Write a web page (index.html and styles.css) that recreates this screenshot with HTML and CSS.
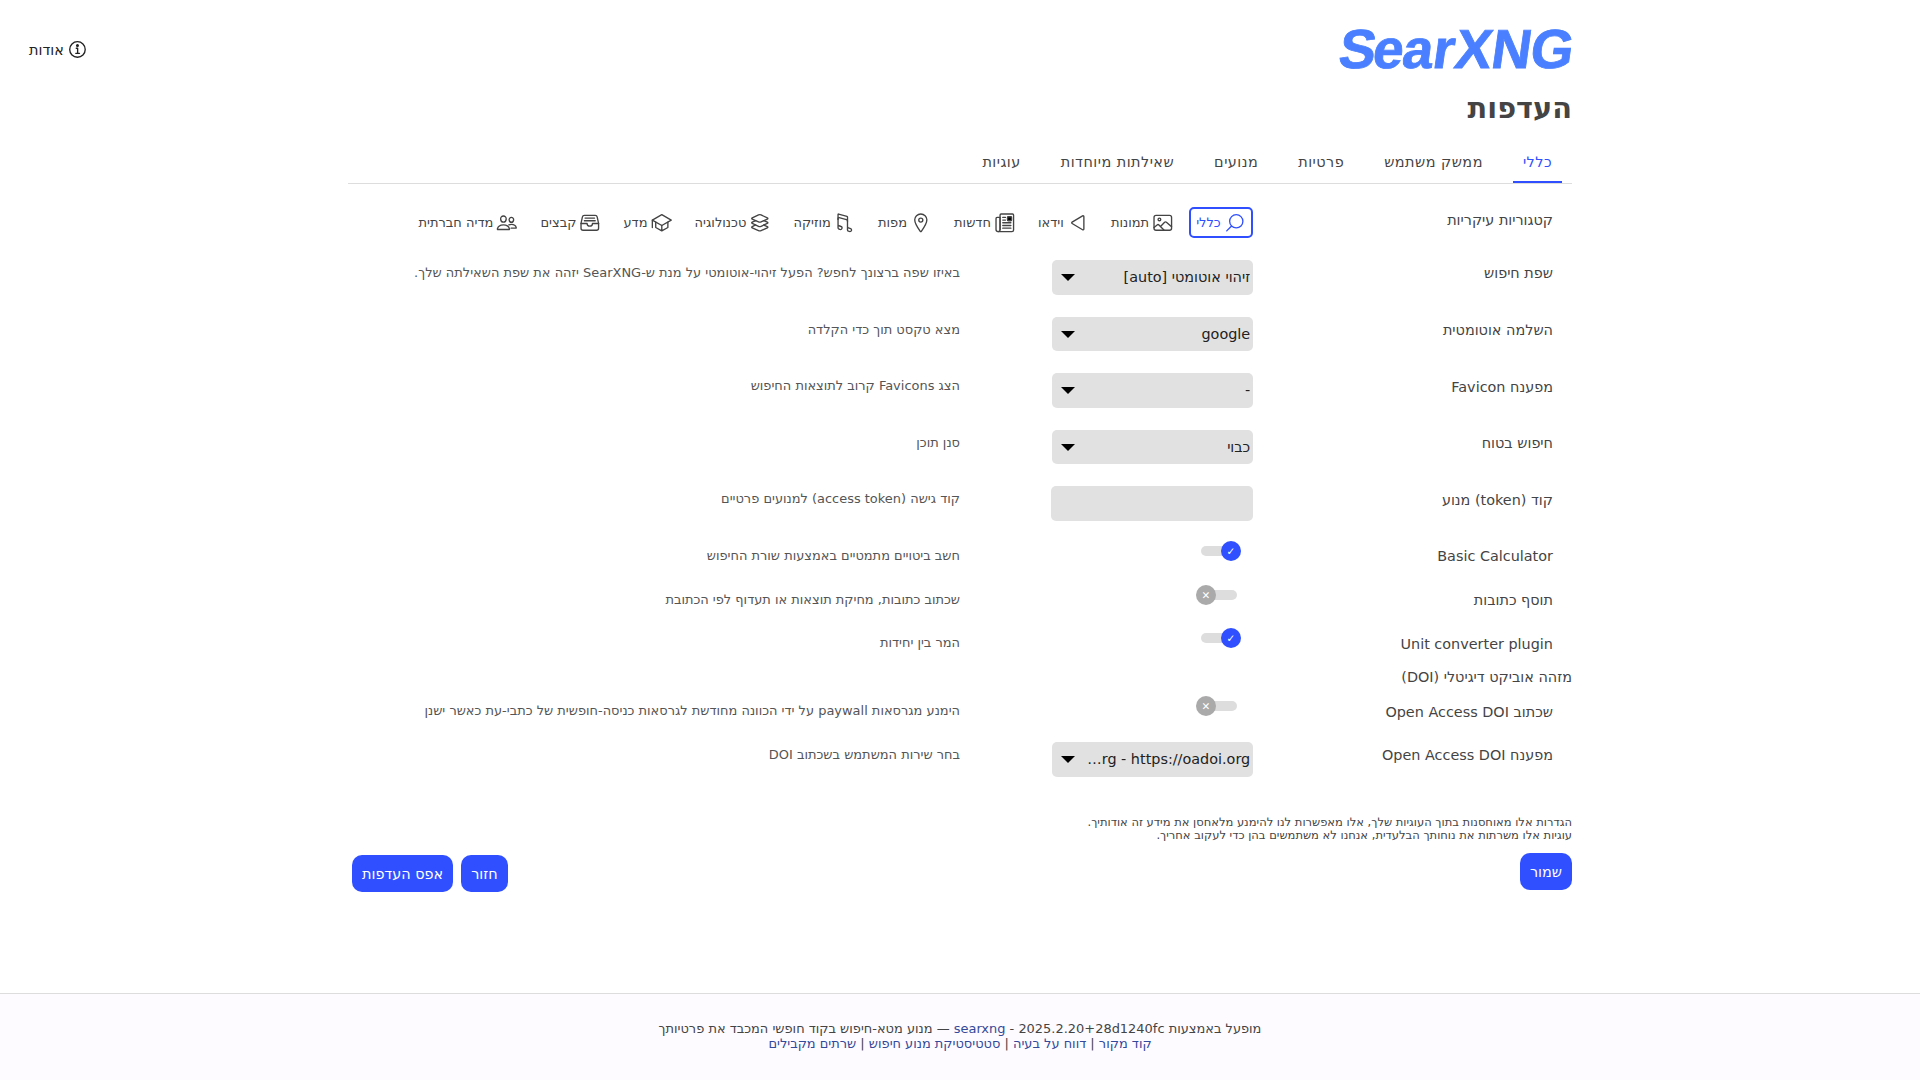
FILE: index.html
```html
<!DOCTYPE html>
<html lang="he" dir="rtl">
<head>
<meta charset="utf-8">
<title>SearXNG</title>
<link rel="stylesheet" href="styles.css">
</head>
<body>
<nav class="links"><a class="about" href="#"><svg class="icon" viewBox="0 0 512 512"><path d="M248 64C146.39 64 64 146.39 64 248s82.39 184 184 184 184-82.39 184-184S349.61 64 248 64z"/><path d="M220 220h32v116M208 340h88"/><circle class="solid" cx="248" cy="156" r="20"/></svg><span>אודות</span></a></nav>
<main class="page">
  <a class="logo" href="#"><svg width="236" height="48" viewBox="0 0 236 48"><text x="0 34 63.5 94 116 152.5 191.5" y="0" transform="translate(0 42) skewX(-8)" direction="ltr">SearXNG</text></svg></a>
  <h1 class="title">העדפות</h1>
  <div class="tabs">
    <a class="tab selected">כללי</a><a class="tab">ממשק משתמש</a><a class="tab">פרטיות</a><a class="tab">מנועים</a><a class="tab">שאילתות מיוחדות</a><a class="tab">עוגיות</a>
  </div>
  <div class="categories-row">
    <div class="name">קטגוריות עיקריות</div>
    <div class="categories">
      <div class="category selected"><svg class="icon" viewBox="0 0 512 512"><path d="M221.09 64a157.09 157.09 0 10157.09 157.09A157.1 157.1 0 00221.09 64zM338.29 338.29L448 448"/></svg><span>כללי</span></div>
      <div class="category"><svg class="icon" viewBox="0 0 512 512"><rect x="48" y="80" width="416" height="352" rx="48"/><circle cx="336" cy="176" r="32"/><path d="M304 335.79l-90.66-90.49a32 32 0 00-43.87-1.3L48 352M224 432l123.34-123.34a32 32 0 0143.11-2L464 368"/></svg><span>תמונות</span></div>
      <div class="category"><svg class="icon" viewBox="0 0 512 512"><path d="M112 111v290c0 17.44 17 28.52 31 20.16l247.9-148.37c12.12-7.25 12.12-26.33 0-33.58L143 90.84c-14-8.36-31 2.72-31 20.16z"/></svg><span>וידאו</span></div>
      <div class="category"><svg class="icon" viewBox="0 0 512 512"><path d="M368 415.86V72a24.07 24.07 0 00-24-24H72a24.07 24.07 0 00-24 24v352a40.12 40.12 0 0040 40h328"/><path d="M416 464h0a48 48 0 01-48-48V128h72a24 24 0 0124 24v264a48 48 0 01-48 48z"/><path d="M240 128h64M240 192h64M112 256h192M112 320h192M112 384h192"/><path class="solid" d="M176 208h-64a16 16 0 01-16-16v-64a16 16 0 0116-16h64a16 16 0 0116 16v64a16 16 0 01-16 16z"/></svg><span>חדשות</span></div>
      <div class="category"><svg class="icon" viewBox="0 0 512 512"><path d="M256 48c-79.5 0-144 61.39-144 137 0 87 96 224.87 131.25 272.49a15.77 15.77 0 0025.5 0C304 409.89 400 272.07 400 185c0-75.61-64.5-137-144-137z"/><circle cx="256" cy="192" r="48"/></svg><span>מפות</span></div>
      <div class="category"><svg class="icon" viewBox="0 0 512 512"><path d="M192 218v-6c0-14.84 10-27 24.24-30.59l174.59-46.68A20 20 0 01416 154v22"/><path d="M416 295.94v80c0 13.91-8.93 25.59-22 30l-22 8c-25.9 8.72-52-10.42-52-38h0a33.37 33.37 0 0123-32l51-18.15c13.07-4.4 22-15.94 22-29.85V58a10 10 0 00-12.6-9.61L204 102a16.48 16.48 0 00-12 16v226c0 13.91-8.93 25.6-22 30l-52 18c-13.88 4.68-22 17.22-22 32h0c0 27.58 26.52 46.55 52 38l22-8c13.07-4.4 22-16.08 22-30v-80"/></svg><span>מוזיקה</span></div>
      <div class="category"><svg class="icon" viewBox="0 0 512 512"><path d="M434.8 137.65l-149.36-68.1c-16.19-7.4-42.69-7.4-58.88 0L77.3 137.65c-17.6 8-17.6 21.09 0 29.09l148 67.5c16.89 7.7 44.69 7.7 61.58 0l148-67.5c17.52-8 17.52-21.1-.08-29.09z"/><path d="M160 308.52l-82.7 37.11c-17.6 8-17.6 21.1 0 29.1l148 67.5c16.89 7.69 44.69 7.69 61.58 0l148-67.5c17.6-8 17.6-21.1 0-29.1l-79.94-38.47"/><path d="M160 204.48l-82.8 37.16c-17.6 8-17.6 21.1 0 29.1l148 67.49c16.89 7.7 44.69 7.7 61.58 0l148-67.49c17.7-8 17.7-21.1.1-29.1L352 204.48"/></svg><span>טכנולוגיה</span></div>
      <div class="category"><svg class="icon" viewBox="0 0 512 512"><path d="M32 192L256 64l224 128-224 128L32 192z"/><path d="M112 240v128l144 80 144-80V240M480 368V192M256 320v128"/></svg><span>מדע</span></div>
      <div class="category"><svg class="icon" viewBox="0 0 512 512"><path d="M384 80H128c-26 0-43 14-48 40L48 272v112a48.14 48.14 0 0048 48h320a48.14 48.14 0 0048-48V272l-32-152c-5-27-23-40-48-40z"/><path d="M48 272h144M320 272h144M192 272a64 64 0 00128 0M144 144h224M128 208h256"/></svg><span>קבצים</span></div>
      <div class="category"><svg class="icon" viewBox="0 0 512 512"><path d="M402 168c-2.93 40.67-33.1 72-66 72s-63.12-31.32-66-72c-3-42.31 26.37-72 66-72s69 30.46 66 72z"/><path d="M336 304c-65.17 0-127.84 32.37-143.54 95.41-2.08 8.34 3.15 16.59 11.72 16.59h263.65c8.57 0 13.77-8.25 11.72-16.59C463.85 335.36 401.18 304 336 304z"/><path d="M200 185.94c-2.34 32.48-26.72 58.06-53 58.06s-50.7-25.57-53-58.06C91.61 152.15 115.34 128 147 128s55.39 24.77 53 57.94z"/><path d="M206 306c-18.05-8.27-37.93-11.45-59-11.45-52 0-102.1 25.85-114.65 76.2-1.65 6.66 2.53 13.25 9.37 13.25H154"/></svg><span>מדיה חברתית</span></div>
    </div>
  </div>
  <div class="row"><div class="name">שפת חיפוש</div><div class="value"><div class="select"><span>זיהוי אוטומטי [auto]</span></div></div><div class="description">באיזו שפה ברצונך לחפש? הפעל זיהוי-אוטומטי על מנת ש-SearXNG יזהה את שפת השאילתה שלך.</div></div>
  <div class="row"><div class="name">השלמה אוטומטית</div><div class="value"><div class="select"><span>google</span></div></div><div class="description">מצא טקסט תוך כדי הקלדה</div></div>
  <div class="row"><div class="name">מפענח Favicon</div><div class="value"><div class="select"><span>-</span></div></div><div class="description">הצג Favicons קרוב לתוצאות החיפוש</div></div>
  <div class="row"><div class="name">חיפוש בטוח</div><div class="value"><div class="select"><span>כבוי</span></div></div><div class="description">סנן תוכן</div></div>
  <div class="row"><div class="name">קוד (token) מנוע</div><div class="value"><input class="token" type="text"></div><div class="description">קוד גישה (access token) למנועים פרטיים</div></div>
  <div class="row short"><div class="name">Basic Calculator</div><div class="value"><div class="toggle on"><span class="knob">✓</span></div></div><div class="description">חשב ביטויים מתמטיים באמצעות שורת החיפוש</div></div>
  <div class="row short"><div class="name">תוסף כתובות</div><div class="value"><div class="toggle"><span class="knob">✕</span></div></div><div class="description">שכתוב כתובות, מחיקת תוצאות או תעדוף לפי הכתובת</div></div>
  <div class="row short"><div class="name">Unit converter plugin</div><div class="value"><div class="toggle on"><span class="knob">✓</span></div></div><div class="description">המר בין יחידות</div></div>
  <div class="group-title">מזהה אוביקט דיגיטלי (DOI)</div>
  <div class="row short"><div class="name">שכתוב Open Access DOI</div><div class="value"><div class="toggle"><span class="knob">✕</span></div></div><div class="description">הימנע מגרסאות paywall על ידי הכוונה מחודשת לגרסאות כניסה-חופשית של כתבי-עת כאשר ישנן</div></div>
  <div class="row"><div class="name">מפענח Open Access DOI</div><div class="value"><div class="select"><span>oadoi.org - https://oadoi.org</span></div></div><div class="description">בחר שירות המשתמש בשכתוב DOI</div></div>
  <p class="note">הגדרות אלו מאוחסנות בתוך העוגיות שלך, אלו מאפשרות לנו להימנע מלאחסן את מידע זה אודותיך.<br>עוגיות אלו משרתות את נוחותך הבלעדית, אנחנו לא משתמשים בהן כדי לעקוב אחריך.</p>
  <div class="actions"><a class="button">שמור</a><div class="secondary"><a class="button">חזור</a><a class="button">אפס העדפות</a></div></div>
</main>
<footer class="footer">
  <p>מופעל באמצעות <a href="#">searxng</a> - 2025.2.20+28d1240fc — מנוע מטא-חיפוש בקוד חופשי המכבד את פרטיותך<br><a href="#">קוד מקור</a> | <a href="#">דווח על בעיה</a> | <a href="#">סטטיסטיקת מנוע חיפוש</a> | <a href="#">שרתים מקבילים</a></p>
</footer>
</body>
</html>
```
FILE: styles.css
```css
* { box-sizing: border-box; }
html { height: 100%; }
body {
  margin: 0;
  height: 1080px;
  display: flex;
  flex-direction: column;
  overflow: hidden;
  background: #fff;
  color: #444;
  font: 14.4px/17px "DejaVu Sans", sans-serif;
}
a { text-decoration: none; color: inherit; }
.icon {
  width: 21.6px;
  height: 21.6px;
  flex: none;
  fill: none;
  stroke: currentColor;
  stroke-width: 32;
  stroke-linecap: round;
  stroke-linejoin: round;
  transform: scaleX(-1);
}
.icon .solid { fill: #000; }
.links { position: absolute; top: 39px; left: 29px; }
.about { display: flex; align-items: center; gap: 3px; color: #222; }
.about span { padding-top: 1px; }
.about .icon { transform: none; }
.page { width: 1224px; margin: 0 auto; flex: 1; }
.logo { display: block; width: 236px; height: 48px; margin: 26px -1px 0 0; }
.logo svg { display: block; overflow: visible; }
.logo text { font: bold 55px "Liberation Sans", sans-serif; fill: #4a80ff; stroke: #4a80ff; stroke-width: .8px; }
.title { margin: 17px 0 0; font-size: 28.8px; line-height: 34px; height: 34px; }
.tabs {
  display: flex;
  gap: 20px;
  height: 59px;
  padding-right: 10px;
  align-items: flex-end;
  border-bottom: 1px solid #ddd;
}
.tab { height: 41px; padding: 12px 10px 0; letter-spacing: .48px; }
.tab.selected { color: #3050ff; border-bottom: 2px solid #3050ff; }
.row, .categories-row { display: grid; grid-template-columns: 319px 293px 1fr; }
.categories-row { grid-template-columns: 319px 1fr; height: 67px; padding-top: 23px; }
.row { height: 56.6px; padding-top: 9px; }
.row.short { height: 43.7px; }
.name { padding: 5.33px 19px 0 0; white-space: nowrap; }
.categories { display: flex; gap: 7.2px; height: 31px; }
.category {
  display: flex;
  align-items: center;
  gap: 3.1px;
  padding: 0 5.6px;
  border: 2px solid transparent;
  border-radius: 5px;
  font-size: 13px;
  white-space: nowrap;
}
.category.selected { color: #3050ff; border-color: #3050ff; }
.description { padding-top: 5px; font-size: 12.96px; line-height: 16px; color: #555; white-space: nowrap; }
.select {
  display: flex;
  align-items: center;
  justify-content: space-between;
  width: 201px;
  height: 34.56px;
  padding: .46px 2.8px 0 9px;
  border-radius: 5px;
  background: #e1e1e1;
  color: #222;
}
.select span { width: 164px; overflow: hidden; white-space: nowrap; text-overflow: ellipsis; }
.select::after {
  content: "";
  border: 7px solid transparent;
  border-top-color: #000;
  border-bottom: 0;
}
.token { display: block; width: 202px; height: 35px; border: 0; border-radius: 5px; background: #e1e1e1; }
.toggle {
  display: flex;
  align-items: center;
  justify-content: flex-end;
  width: 36px;
  height: 10px;
  margin: 3px 16px 0 0;
  border-radius: 5px;
  background: #ddd;
}
.toggle.on { justify-content: flex-start; }
.knob {
  width: 20px;
  height: 20px;
  margin: 0 0 0 -5px;
  border-radius: 50%;
  background: #aaa;
  color: #fff;
  font-size: 10.5px;
  line-height: 21px;
  text-align: center;
}
.on .knob { margin: 0 -4px 0 0; background: #3050ff; }
.group-title { height: 24.4px; padding-top: 4px; }
.note { margin: 26px 0 0; font-size: 11.52px; line-height: 13px; }
.actions { display: flex; justify-content: space-between; margin-top: 11px; }
.secondary { display: flex; gap: 8px; padding: 2px 0 0 4px; }
.button { height: 37px; padding: 0 10px; border-radius: 10px; background: #3050ff; color: #fff; line-height: 38px; }
.footer { height: 87px; border-top: 1px solid #ddd; background: #fdfbff; text-align: center; }
.footer p { margin: 27px 0 0; font-size: 12.96px; line-height: 15px; }
.footer a { color: #334999; }
```
